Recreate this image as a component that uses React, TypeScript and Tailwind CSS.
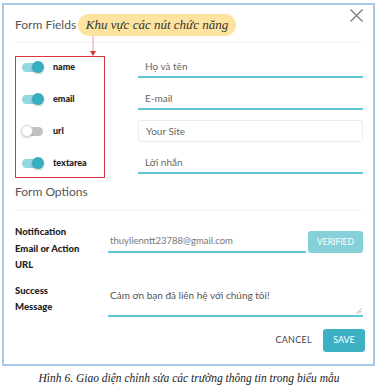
import React from "react";

const ui = { fontFamily: "Lato, 'Noto Sans', sans-serif" };
const serif = { fontFamily: "'Liberation Serif', 'Times New Roman', serif" };

function Toggle({ on }: { on: boolean }) {
  if (on) {
    return (
      <div className="relative w-[23px] h-[14px] flex items-center">
        <div className="w-[20px] h-[9px] rounded-full bg-[#95d5de]" />
        <div className="absolute left-[10px] top-[1px] w-[12px] h-[12px] rounded-full bg-[#38adbf] shadow-[0_1px_2px_rgba(0,0,0,0.25)]" />
      </div>
    );
  }
  return (
    <div className="relative w-[23px] h-[14px] flex items-center">
      <div className="w-[21px] h-[9px] rounded-full bg-[#c2c2c2]" />
      <div className="absolute left-[-1px] top-[1px] w-[12px] h-[12px] rounded-full bg-white border border-[#d6d6d6] shadow-[0_1px_2px_rgba(0,0,0,0.2)]" />
    </div>
  );
}

function UnderlineInput({ text }: { text: string }) {
  return (
    <div className="h-[22px] flex items-center pl-[7px] border-b-2 border-[#62c7d5] text-[10px] text-[#666]" style={ui}>
      {text}
    </div>
  );
}

export default function App() {
  const rows = [
    { label: "name", on: true },
    { label: "email", on: true },
    { label: "url", on: false },
    { label: "textarea", on: true },
  ];
  return (
    <div className="w-[378px] h-[386px] bg-white pt-[3px] pl-[2px]">
      <div className="relative w-[373px] h-[363px] border-2 border-[#a6c9e9] flex flex-col">
        {/* close */}
        <svg className="absolute right-[9px] top-[3px]" width="15" height="15" viewBox="0 0 15 15">
          <path d="M1.5 1.5 L13.5 13.5 M13.5 1.5 L1.5 13.5" stroke="#7a7a7a" strokeWidth="1.3" fill="none" />
        </svg>
        {/* annotation arrow */}
        <svg className="absolute left-[85px] top-[31px]" width="8" height="21" viewBox="0 0 8 21">
          <line x1="4" y1="0" x2="4" y2="16" stroke="#e49a9a" strokeWidth="1" />
          <path d="M1 15 L7 15 L4 20 Z" fill="#d8383b" />
        </svg>

        {/* header */}
        <div className="mt-[9px] h-[22px] pl-[11px] flex items-center">
          <span className="w-[63px] text-[12px] text-[#555]" style={ui}>Form Fields</span>
          <div className="h-[22px] w-[158px] rounded-full bg-[#fde3a0] flex items-center justify-center">
            <span className="italic text-[13px] text-[#333]" style={serif}>Khu vực các nút chức năng</span>
          </div>
        </div>
        <div className="mt-[6px] ml-[11px] mr-[10px] h-px bg-[#f2f2f2]" />

        {/* fields */}
        <div className="mt-[13px] ml-[11px] mr-[10px] flex">
          <div className="w-[90px] border-[1.5px] border-[#d8383b] pl-[6px] pb-[4px] flex flex-col gap-[12px]">
            {rows.map((r) => (
              <div key={r.label} className="h-[20px] flex items-center gap-[8px]">
                <Toggle on={r.on} />
                <span className="text-[9px] font-black text-[#222]" style={ui}>{r.label}</span>
              </div>
            ))}
          </div>
          <div className="ml-[33px] flex-1 flex flex-col gap-[10px]">
            <UnderlineInput text="Họ và tên" />
            <UnderlineInput text="E-mail" />
            <div className="h-[22px] flex items-center pl-[7px] border border-[#ececec] rounded-[2px] text-[10px] text-[#666]" style={ui}>
              Your Site
            </div>
            <UnderlineInput text="Lời nhắn" />
          </div>
        </div>

        {/* form options */}
        <div className="mt-[6px] ml-[11px] h-[16px] flex items-center text-[12px] text-[#555]" style={ui}>Form Options</div>
        <div className="mt-[10px] ml-[11px] mr-[10px] h-px bg-[#f2f2f2]" />

        {/* notification */}
        <div className="mt-[13px] ml-[11px] mr-[10px] flex">
          <div className="w-[93px] text-[9.5px] font-black text-[#222] leading-[16.5px]" style={ui}>
            <div>Notification</div>
            <div>Email or Action</div>
            <div>URL</div>
          </div>
          <div className="flex-1 mt-[7px] h-[22px] flex items-end gap-[2px]">
            <div className="flex-1 h-[22px] pl-[2px] flex items-center border-b-2 border-[#62c7d5] text-[9.5px] text-[#777]" style={ui}>
              thuylienntt23788@gmail.com
            </div>
            <div className="w-[55px] h-[22px] rounded-[3px] bg-[#86d0da] flex items-center justify-center text-[8.5px] text-white" style={ui}>
              VERIFIED
            </div>
          </div>
        </div>

        {/* success */}
        <div className="mt-[9px] ml-[11px] mr-[10px] flex">
          <div className="w-[93px] text-[9.5px] font-black text-[#222] leading-[16px]" style={ui}>
            <div>Success</div>
            <div>Message</div>
          </div>
          <div className="relative flex-1 h-[34px] pl-[2px] pt-[5px] border-b-2 border-[#62c7d5] text-[10px] text-[#555]" style={ui}>
            Cảm ơn bạn đã liên hệ với chúng tôi!
            <svg className="absolute right-[1px] bottom-[1px]" width="6" height="6" viewBox="0 0 6 6">
              <path d="M5.5 0.5 L0.5 5.5 M5.5 3 L3 5.5" stroke="#999" strokeWidth="0.8" />
            </svg>
          </div>
        </div>

        {/* buttons */}
        <div className="mt-[12px] mr-[8px] flex justify-end items-center gap-[11px]">
          <span className="text-[9px] text-[#444] tracking-[0.3px]" style={ui}>CANCEL</span>
          <div className="w-[42px] h-[23px] rounded-[3px] bg-[#3db1c3] flex items-center justify-center text-[9px] text-white" style={ui}>
            SAVE
          </div>
        </div>
      </div>
      <div className="mt-[4px] -ml-[2px] text-center italic text-[11.5px] text-[#222]" style={serif}>
        Hình 6. Giao diện chỉnh sửa các trường thông tin trong biểu mẫu
      </div>
    </div>
  );
}
